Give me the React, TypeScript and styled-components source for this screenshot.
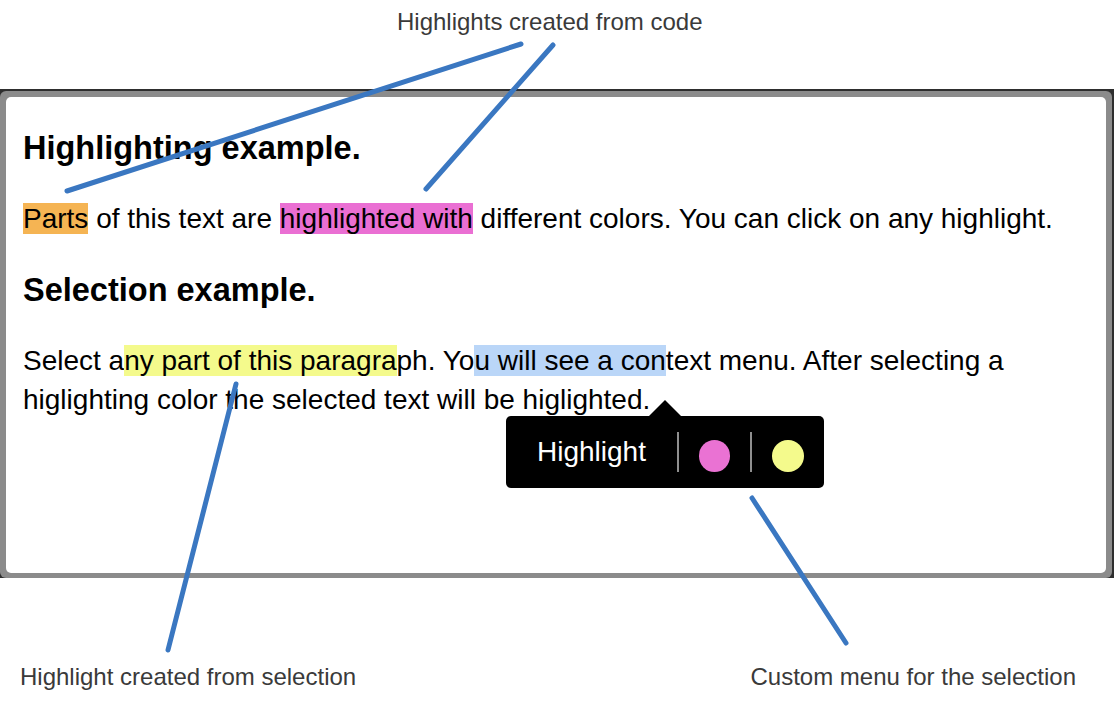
import React from 'react';
import styled, { createGlobalStyle } from 'styled-components';

const GlobalStyle = createGlobalStyle`
  html, body {
    margin: 0;
    padding: 0;
    background: #ffffff;
  }
  body {
    font-family: 'Liberation Sans', Arial, Helvetica, sans-serif;
  }
`;

// callout lines drawn over the page, from label to target
const callouts = [
  { x1: 521, y1: 44, x2: 67, y2: 191 },
  { x1: 553, y1: 45, x2: 426, y2: 189 },
  { x1: 236, y1: 384, x2: 168, y2: 650 },
  { x1: 752, y1: 498, x2: 846, y2: 643 },
];

const swatches = ['#ea72d3', '#f4fa8c'];

function App() {
  return (
    <>
      <GlobalStyle />
      <Page>
        <TopLabel>Highlights created from code</TopLabel>

        <FrameShadow>
          <Frame>
            <Content>
              <Heading>Highlighting example.</Heading>
              <Paragraph>
                <Mark $color="#f5b453">Parts</Mark> of this text are{' '}
                <Mark $color="#ea6fd3">highlighted with</Mark> different colors. You can click on any
                highlight.
              </Paragraph>

              <Heading>Selection example.</Heading>
              <Paragraph>
                Select a<Mark $color="#f4fa8c">ny part of this paragra</Mark>ph. Yo
                <Mark $color="#bad6f8">u will see a con</Mark>text menu. After selecting a higlighting
                color the selected text will be higlighted.
              </Paragraph>

              <Menu>
                <MenuLabel>Highlight</MenuLabel>
                {swatches.map((c) => (
                  <React.Fragment key={c}>
                    <Divider />
                    <Swatch $color={c} />
                  </React.Fragment>
                ))}
              </Menu>
            </Content>
          </Frame>
        </FrameShadow>

        <BottomLabels>
          <Label>Highlight created from selection</Label>
          <Label>Custom menu for the selection</Label>
        </BottomLabels>

        <Callouts width="1116" height="720" viewBox="0 0 1116 720">
          {callouts.map((l, i) => (
            <line key={i} {...l} />
          ))}
        </Callouts>
      </Page>
    </>
  );
}

const Page = styled.div`
  position: relative;
  width: 1116px;
  height: 720px;
  overflow: hidden;
  display: flex;
  flex-direction: column;
`;

const Label = styled.div`
  font-size: 24px;
  line-height: 28px;
  color: #3a3a3a;
  white-space: nowrap;
`;

const TopLabel = styled(Label)`
  padding: 8px 0 0 397px;
  height: 28px;
`;

const FrameShadow = styled.div`
  margin-top: 53px;
  width: 1114px;
  background: #2e2e2e;
  padding: 2px 2px 0 0;
  box-sizing: border-box;
`;

const Frame = styled.div`
  background: #8b8b8b;
  border-radius: 6px;
  padding: 6px 6px 5px 6px;
`;

const Content = styled.div`
  position: relative;
  background: #ffffff;
  border-radius: 5px;
  height: 476px;
  box-sizing: border-box;
  padding: 28px 17px 0 17px;
  color: #000;
`;

const Heading = styled.h3`
  margin: 0 0 28px;
  font-size: 32.5px;
  line-height: 46px;
  font-weight: bold;
`;

const Paragraph = styled.p`
  margin: 0 0 29px;
  font-size: 28px;
  line-height: 39px;
`;

const Mark = styled.span<{ $color: string }>`
  background: ${(p) => p.$color};
`;

const Menu = styled.div`
  position: absolute;
  left: 500px;
  top: 319px;
  width: 318px;
  height: 72px;
  box-sizing: border-box;
  background: #000;
  border-radius: 5px;
  display: flex;
  align-items: center;
  padding: 0 20px 0 31px;

  &::before {
    content: '';
    position: absolute;
    top: -16px;
    left: 143px;
    border-left: 16px solid transparent;
    border-right: 16px solid transparent;
    border-bottom: 16px solid #000;
  }
`;

const MenuLabel = styled.span`
  color: #fff;
  font-size: 28px;
  line-height: 32px;
  margin-right: 31px;
`;

const Divider = styled.span`
  width: 2px;
  height: 40px;
  background: #8f8f8f;
  margin-right: 20px;
`;

const Swatch = styled.span<{ $color: string }>`
  width: 32px;
  height: 32px;
  border-radius: 50%;
  background: ${(p) => p.$color};
  margin: 8px 20px 0 0;

  &:last-child {
    margin-right: 0;
  }
`;

const BottomLabels = styled.div`
  margin-top: 85px;
  display: flex;
  justify-content: space-between;
  padding: 0 40px 0 20px;
`;

const Callouts = styled.svg`
  position: absolute;
  top: 0;
  left: 0;
  pointer-events: none;

  line {
    stroke: #3a77c1;
    stroke-width: 5;
    stroke-linecap: round;
  }
`;

export default App;
